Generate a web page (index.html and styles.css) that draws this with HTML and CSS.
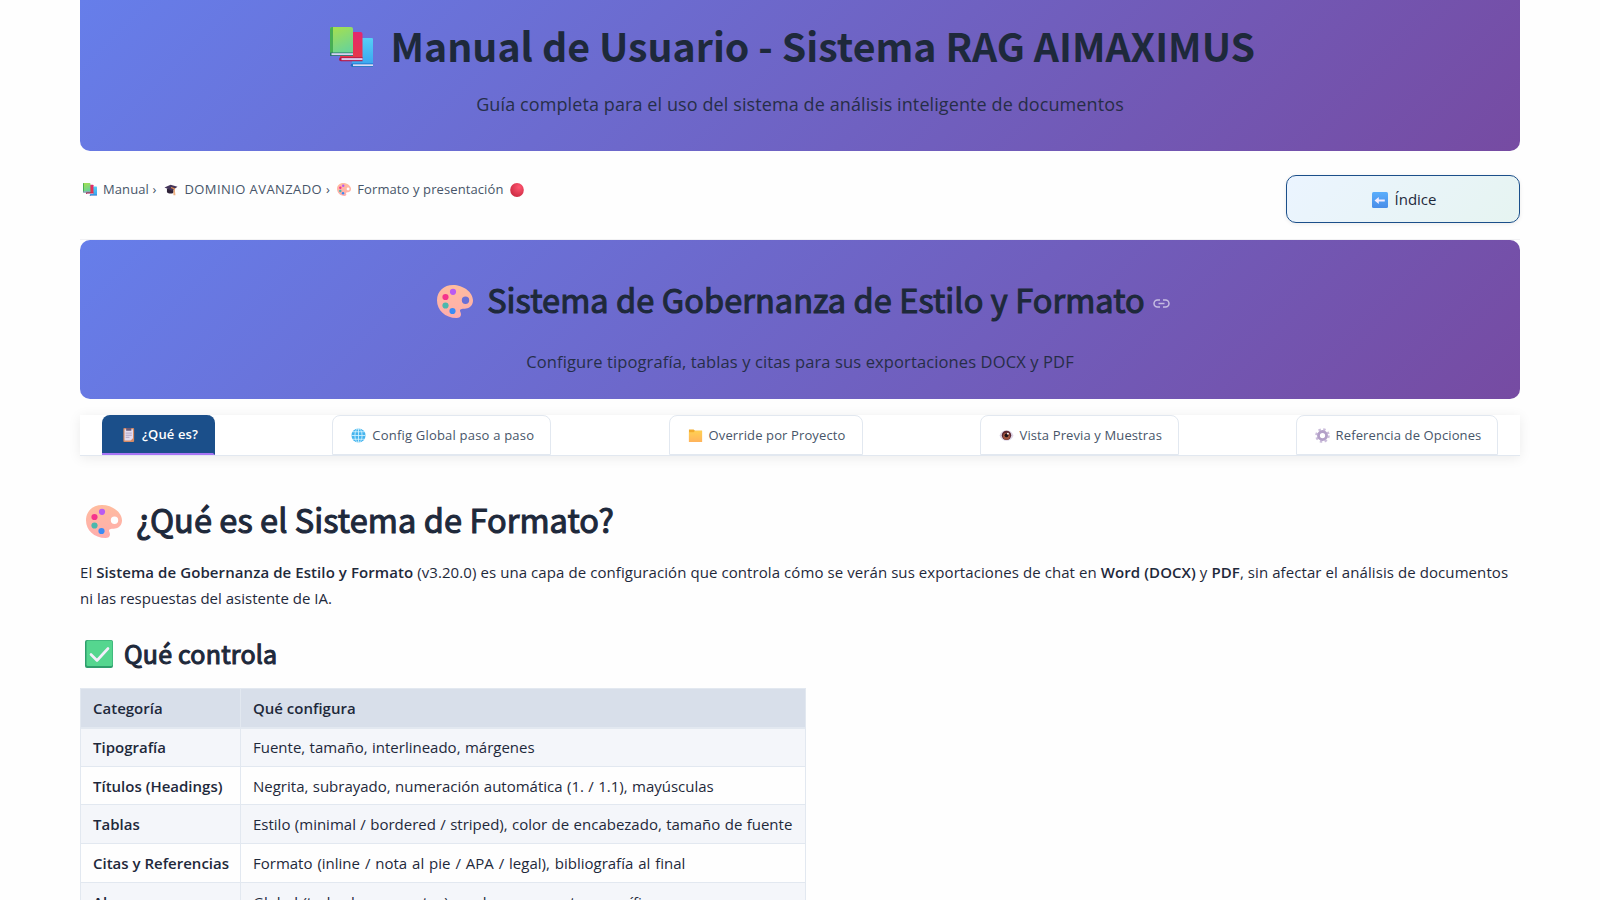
FILE: index.html
```html
<!doctype html>
<html lang="es">
<head>
  <meta charset="utf-8">
  <meta name="viewport" content="width=device-width, initial-scale=1.0">
  <title>Manual de Usuario - Sistema RAG AIMAXIMUS</title>
  <link rel="stylesheet" href="styles.css">
</head>
<body>
  <!-- Icon symbols -->
  <svg class="defs" width="0" height="0">
    <defs>
      <linearGradient id="gGreen" x1="0" y1="0" x2="0.4" y2="1"><stop offset="0" stop-color="#a9e04b"/><stop offset="1" stop-color="#6bd495"/></linearGradient>
      <linearGradient id="gRed" x1="0" y1="0" x2="0" y2="1"><stop offset="0" stop-color="#e3286f"/><stop offset="1" stop-color="#e63946"/></linearGradient>
      <linearGradient id="gBlue" x1="0" y1="0" x2="0" y2="1"><stop offset="0" stop-color="#55d0f5"/><stop offset="1" stop-color="#3aa5f0"/></linearGradient>
      <linearGradient id="gSkin" x1="0" y1="0" x2="0" y2="1"><stop offset="0" stop-color="#ffbc9e"/><stop offset="1" stop-color="#ffadad"/></linearGradient>
      <radialGradient id="gBall" cx="0.65" cy="0.3" r="0.8"><stop offset="0" stop-color="#ff5570"/><stop offset="1" stop-color="#c8283f"/></radialGradient>
      <linearGradient id="gFolder" x1="0" y1="0" x2="0" y2="1"><stop offset="0" stop-color="#ffd052"/><stop offset="1" stop-color="#ffb35c"/></linearGradient>
      <linearGradient id="gArrow" x1="0" y1="0" x2="0" y2="1"><stop offset="0" stop-color="#5aaefc"/><stop offset="1" stop-color="#4a8de8"/></linearGradient>
    </defs>
    <symbol id="books" viewBox="0 0 43.500 40">
      <path d="M22 11h19.500a2 2 0 0 1 2 2v25H22z" fill="url(#gBlue)"/>
      <path d="M22.500 36.500h21V40H22.500a1.750 1.750 0 0 1 0-3.500z" fill="#1f6fc4"/>
      <path d="M23 37.300h20.500v1.800H23z" fill="#d8dcf5"/>
      <path d="M10 5h20.500a2 2 0 0 1 2 2v25H10z" fill="url(#gRed)"/>
      <path d="M11 30.300h21.500v3.900H11a1.950 1.950 0 0 1 0-3.900z" fill="#b3174a"/>
      <path d="M11.500 31.100h21v2h-21z" fill="#dcc8ea"/>
      <path d="M2 0h19a2 2 0 0 1 2 2v25H0V2a2 2 0 0 1 2-2z" fill="url(#gGreen)"/>
      <path d="M2 0h1v26H0V2a2 2 0 0 1 2-2z" fill="#47ae54"/>
      <path d="M1 25.500h22v3.500H1a1.750 1.750 0 0 1 0-3.500z" fill="#27736f"/>
      <path d="M1.500 26.200H23v1.900H1.500z" fill="#d6d4f1"/>
    </symbol>
    <symbol id="palette" viewBox="0 0 36 33">
      <path d="M16 0C26 0 36 7 36 15.500c0 4.500-3 7.500-7 8-3 .4-6 .2-6 2 0 1.500 1 2 1 4 0 2.500-2 3.500-4.500 3.500C8 33 0 25 0 15.500S7 0 16 0zM28.500 11.500a3.700 3.700 0 1 0 0 7.400 3.700 3.700 0 0 0 0-7.400z" fill="url(#gSkin)"/>
      <circle cx="16" cy="6.800" r="3.100" fill="#b95bf2"/>
      <circle cx="8.500" cy="12" r="3.100" fill="#f5348c"/>
      <circle cx="8.500" cy="20.500" r="3.100" fill="#4ab8ad"/>
      <circle cx="15.500" cy="26" r="3.100" fill="#3b8bf5"/>
    </symbol>
    <symbol id="cap" viewBox="0 0 16 16">
      <path d="M3 7v4.500c1.500 2 6.500 2 8 .5V7z" fill="#2e2238"/>
      <path d="M0 5.500 7.500 2 16 4.500 9 9.500z" fill="#44355a"/>
      <path d="M8 5.500l4 1.500v6" fill="none" stroke="#e8904e" stroke-width="1.300"/>
      <path d="M11 11h2l.5 4H11z" fill="#f0b080"/>
    </symbol>
    <symbol id="ball" viewBox="0 0 16 16">
      <ellipse cx="8" cy="8" rx="7.800" ry="7.900" fill="url(#gBall)"/>
    </symbol>
    <symbol id="back" viewBox="0 0 16 16">
      <rect width="16" height="16" rx="1.500" fill="url(#gArrow)"/>
      <path d="M2.500 8.500 6.800 5v2.400h6v2.200h-6V12z" fill="#f3ecff"/>
    </symbol>
    <symbol id="clip" viewBox="0 0 16 16">
      <rect x="2.500" y="1" width="11.500" height="15" rx="1" fill="#d68a64"/>
      <path d="M3.800 2.500h9v9.500l-2.500 2.500H3.800z" fill="#e4dcf0"/>
      <path d="M5.500 1h5.500v3H5.500z" fill="#6b5b78"/>
      <path d="M5 6.500h6.500M5 8.800h6.500M5 11h4" stroke="#a99bbd" stroke-width=".9"/>
    </symbol>
    <symbol id="globe" viewBox="0 0 16 16">
      <circle cx="8" cy="8" r="7.500" fill="#45b4ee"/>
      <path d="M.5 8h15M8 .5v15M2 4h12M2 12h12" stroke="#d3f3ff" stroke-width=".9"/>
      <ellipse cx="8" cy="8" rx="3.800" ry="7.500" fill="none" stroke="#d3f3ff" stroke-width=".9"/>
    </symbol>
    <symbol id="folder" viewBox="0 0 16 16">
      <path d="M1 1.500h5L7.500 3H15v12H1z" fill="#f2ac2e"/>
      <path d="M1 4.500h5L7.500 3H15v12H1z" fill="url(#gFolder)"/>
    </symbol>
    <symbol id="eye" viewBox="0 0 16 16">
      <path d="M.5 8C3 .5 13 .5 15.500 8 13 15.500 3 15.500.5 8z" fill="#ddd5e6"/>
      <circle cx="8" cy="7.800" r="5" fill="#5c2833"/>
      <circle cx="8" cy="8.700" r="3.700" fill="#a0543f"/>
      <circle cx="8" cy="7.800" r="2" fill="#1d1017"/>
      <circle cx="9.500" cy="6" r="1" fill="#fff"/>
    </symbol>
    <symbol id="gear" viewBox="0 0 16 16">
      <circle cx="8" cy="8" r="6.600" fill="none" stroke="#cbbddb" stroke-width="2.400" stroke-dasharray="2.600 2.580"/>
      <circle cx="8" cy="8" r="4.300" fill="none" stroke="#b3a0c8" stroke-width="3"/>
    </symbol>
    <symbol id="check" viewBox="0 0 28 28">
      <rect width="28" height="28" rx="2" fill="#2f9e6c"/>
      <rect x="1.500" y=".5" width="26" height="25.500" rx="1.500" fill="#55d68f"/>
      <path d="M6 14.500l6 6L23 8.500" fill="none" stroke="#f4eefc" stroke-width="2.600" stroke-linecap="round" stroke-linejoin="round"/>
    </symbol>
  </svg>

  <div class="container">
    <header class="hero hero-main">
      <h1><svg class="ico-books"><use href="#books"/></svg><span>Manual de Usuario - Sistema RAG AIMAXIMUS</span></h1>
      <p>Guía completa para el uso del sistema de análisis inteligente de documentos</p>
    </header>

    <div class="topbar">
      <nav class="crumbs">
        <svg><use href="#books"/></svg><span class="c1">Manual ›</span>
        <svg><use href="#cap"/></svg><span class="c2">DOMINIO AVANZADO ›</span>
        <svg><use href="#palette"/></svg><span class="c3">Formato y presentación</span>
        <svg class="dot"><use href="#ball"/></svg>
      </nav>
      <a class="btn"><svg><use href="#back"/></svg><span>Índice</span></a>
    </div>

    <section class="hero hero-sub">
      <h2><svg class="ico-palette"><use href="#palette"/></svg><span>Sistema de Gobernanza de Estilo y Formato</span>
        <svg class="ico-link" viewBox="0 0 17 9"><path d="M7 1H4.500a3.500 3.500 0 0 0 0 7H7M10 1h2.500a3.500 3.500 0 0 1 0 7H10M5.500 4.500h6"/></svg>
      </h2>
      <p>Configure tipografía, tablas y citas para sus exportaciones DOCX y PDF</p>
    </section>

    <div class="tabs">
      <div class="tab t1 active"><svg><use href="#clip"/></svg><span>¿Qué es?</span></div>
      <div class="tab t2"><svg><use href="#globe"/></svg><span>Config Global paso a paso</span></div>
      <div class="tab t3"><svg><use href="#folder"/></svg><span>Override por Proyecto</span></div>
      <div class="tab t4"><svg><use href="#eye"/></svg><span>Vista Previa y Muestras</span></div>
      <div class="tab t5"><svg><use href="#gear"/></svg><span>Referencia de Opciones</span></div>
    </div>

    <main>
      <h2 class="section-title"><svg class="ico-palette"><use href="#palette"/></svg><span>¿Qué es el Sistema de Formato?</span></h2>
      <p class="intro"><span class="line1">El <strong>Sistema de Gobernanza de Estilo y Formato</strong> (v3.20.0) es una capa de configuración que controla cómo se verán sus exportaciones de chat en <strong>Word (DOCX)</strong> y <strong>PDF</strong>, sin afectar el análisis de documentos</span><br><span class="line2">ni las respuestas del asistente de IA.</span></p>
      <h3><svg class="ico-check"><use href="#check"/></svg><span>Qué controla</span></h3>
      <table>
        <thead>
          <tr><th>Categoría</th><th>Qué configura</th></tr>
        </thead>
        <tbody>
          <tr><td><strong>Tipografía</strong></td><td>Fuente, tamaño, interlineado, márgenes</td></tr>
          <tr><td><strong>Títulos (Headings)</strong></td><td>Negrita, subrayado, numeración automática (1. / 1.1), mayúsculas</td></tr>
          <tr><td><strong>Tablas</strong></td><td>Estilo (minimal / bordered / striped), color de encabezado, tamaño de fuente</td></tr>
          <tr><td><strong>Citas y Referencias</strong></td><td class="wide">Formato (inline / nota al pie / APA / legal), bibliografía al final</td></tr>
          <tr><td><strong>Alcance</strong></td><td>Global (todos los proyectos) o solo un proyecto específico</td></tr>
        </tbody>
      </table>
    </main>
  </div>
</body>
</html>
```
FILE: styles.css
```css
* {
    box-sizing: border-box;
}
html, body {
    height: 100%;
    margin: 0;
    overflow: hidden;
}
body {
    background: #fefefe;
    color: #1e293b;
    font-family: "Open Sans", "Noto Sans", sans-serif;
    font-size: 15px;
    line-height: 25.6px;
}
h1, h2, h3, p {
    margin: 0;
}
svg {
    flex: none;
    display: block;
}
.defs {
    position: absolute;
}
h1, h2, h3 {
    display: flex;
    align-items: center;
    font-family: "Noto Sans CJK SC", sans-serif;
    font-weight: 700;
    white-space: nowrap;
}
h2, h3 {
    font-weight: 400;
    letter-spacing: .08px;
    -webkit-text-stroke: 1.1px #1e293b;
}
h1 span {
    padding-bottom: 5px;
}
h2 span {
    padding-bottom: 4px;
}
strong, th {
    font-weight: 600;
}
.container {
    width: 1440px;
    margin: 0 auto;
}
.hero {
    background: linear-gradient(135deg, #667eea 0%, #764ba2 100%);
    text-align: center;
}
.hero h1, .hero h2 {
    justify-content: center;
}
.hero-main {
    height: 151px;
    padding-top: 15px;
    border-radius: 0 0 10px 10px;
}
.hero-main h1 {
    height: 64px;
    padding-right: 15px;
    font-size: 39.300px;
}
.ico-books {
    width: 43.500px;
    height: 40px;
    margin-right: 17px;
}
.hero-main p {
    margin-top: 13px;
    font-size: 18px;
    letter-spacing: .1px;
    opacity: .9;
}

/* Breadcrumb and index button */
.topbar {
    display: flex;
    justify-content: space-between;
    height: 89px;
    padding-top: 24px;
    border-bottom: 1px solid #f1f1f3;
}
.crumbs {
    display: flex;
    align-items: center;
    height: 29px;
    padding-left: 3px;
    font-size: 13px;
    color: #475569;
    white-space: nowrap;
}
.crumbs svg {
    width: 14px;
    height: 13px;
    margin-right: 6px;
}
.crumbs span {
    margin-right: 7px;
}
.crumbs .c1 {
    margin-right: 8px;
    letter-spacing: .1px;
}
.crumbs .c2 {
    letter-spacing: .42px;
}
.crumbs .c3 {
    letter-spacing: .1px;
}
.crumbs .dot {
    height: 14px;
}
.btn {
    display: flex;
    align-items: center;
    justify-content: center;
    width: 234px;
    height: 48px;
    padding: 1px 0 0 2px;
    border: 1px solid #1b4f8a;
    border-radius: 10px;
    background: linear-gradient(135deg, #ebf4ff 0%, #e6f4f1 100%);
    box-shadow: 0 1px 4px rgba(0, 0, 0, .08);
}
.btn svg {
    width: 16px;
    height: 16px;
    margin-right: 7px;
}

.hero-sub {
    height: 159px;
    padding-top: 36px;
    border-radius: 10px;
}
.hero-sub h2 {
    height: 50px;
    padding-left: 7px;
    font-size: 32.500px;
}
.ico-palette {
    width: 36px;
    height: 33px;
    margin-right: 14px;
}
.ico-link {
    width: 17px;
    height: 9px;
    margin: 5px 0 0 8px;
    fill: none;
    stroke: #fff;
    stroke-width: 1.5;
    opacity: .6;
}
.hero-sub p {
    margin-top: 23px;
    font-size: 16.500px;
    letter-spacing: .12px;
    opacity: .9;
}

/* Tabs */
.tabs {
    display: flex;
    justify-content: space-between;
    height: 41px;
    margin-top: 16px;
    padding: 0 22px;
    background: #fff;
    border-bottom: 1px solid #e2e8f0;
    box-shadow: 0 2px 12px rgba(0, 0, 0, .08);
}
.tab {
    display: flex;
    align-items: center;
    justify-content: center;
    height: 40px;
    padding: 1px 0 0 2px;
    border: 1px solid #e2e8f0;
    border-radius: 8px 8px 0 0;
    background: #fff;
    color: #475569;
    font-size: 13px;
    letter-spacing: .12px;
    white-space: nowrap;
}
.tab svg {
    width: 15px;
    height: 15px;
    margin-right: 6px;
}
.t1 { width: 113px; }
.t2 { width: 219px; letter-spacing: .2px; }
.t3 { width: 194px; }
.t4 { width: 199px; }
.t5 { width: 202px; }
.tab.active {
    padding-left: 4px;
    border: 0;
    border-right: 2px solid #1b4f8a;
    border-bottom: 2px solid #a875f5;
    background: #1b4f8a;
    color: #fff;
    font-weight: 600;
}

/* Content */
.section-title {
    height: 50px;
    margin-top: 40px;
    padding-left: 6px;
    font-size: 32.500px;
}
.intro {
    margin-top: 14px;
    white-space: nowrap;
}
.line1 {
    letter-spacing: .08px;
}
h3 {
    height: 40px;
    margin-top: 23px;
    padding-left: 5px;
    font-size: 25px;
    letter-spacing: .2px;
}
.ico-check {
    width: 28px;
    height: 28px;
    margin-right: 11px;
}
table {
    width: 726px;
    margin-top: 14px;
    border-collapse: collapse;
    table-layout: fixed;
}
th, td {
    height: 38.600px;
    padding: 2px 12px 0;
    border: 1px solid #e2e8f0;
    text-align: left;
    white-space: nowrap;
}
td:last-child {
    word-spacing: .5px;
}
td.wide {
    word-spacing: 1px;
}
th:first-child {
    width: 160px;
}
th {
    height: 39px;
    background: #d8dfea;
    border-bottom-width: 2px;
}
tbody tr:nth-child(odd) {
    background: #f4f6fa;
}
```
